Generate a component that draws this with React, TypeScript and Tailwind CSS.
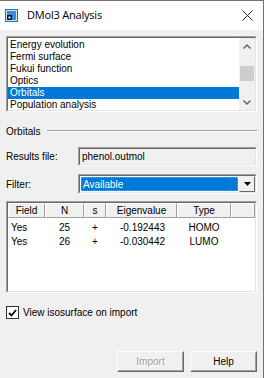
import React from 'react';

const items = [
  'Energy evolution',
  'Fermi surface',
  'Fukui function',
  'Optics',
  'Orbitals',
  'Population analysis',
];

const rows = [
  { field: 'Yes', n: '25', s: '+', e: '-0.192443', type: 'HOMO' },
  { field: 'Yes', n: '26', s: '+', e: '-0.030442', type: 'LUMO' },
];

function Sunken({ className, children }: { className?: string; children: React.ReactNode }) {
  return (
    <div className={`border border-t-[#a0a0a0] border-l-[#a0a0a0] border-r-white border-b-white ${className ?? ''}`}>
      <div className="flex h-full w-full border border-t-[#696969] border-l-[#696969] border-r-[#e3e3e3] border-b-[#e3e3e3]">
        {children}
      </div>
    </div>
  );
}

function AppIcon() {
  return (
    <svg width="13" height="13" viewBox="0 0 13 13">
      <rect x="0.5" y="0.5" width="12" height="12" fill="#cfe4f7" stroke="#1e73c8" />
      <rect x="2" y="2" width="9" height="9" fill="#3a8ad6" />
      <rect x="2" y="6" width="5" height="5" fill="#111" />
      <rect x="3.5" y="7.5" width="2" height="2" fill="#fff" />
    </svg>
  );
}

function Chevron({ up }: { up?: boolean }) {
  return (
    <svg width="8" height="5" viewBox="0 0 8 5">
      <path d={up ? 'M0.5 4.5 L4 1 L7.5 4.5' : 'M0.5 0.5 L4 4 L7.5 0.5'} fill="none" stroke="#606060" strokeWidth="1.4" />
    </svg>
  );
}

function Button({ label, disabled }: { label: string; disabled?: boolean }) {
  return (
    <div className="h-[21px] w-[67px] border border-t-white border-l-white border-r-[#696969] border-b-[#696969]">
      <div
        className={`flex h-full items-center justify-center border border-t-[#f0f0f0] border-l-[#f0f0f0] border-r-[#a0a0a0] border-b-[#a0a0a0] ${
          disabled ? 'text-[#a0a0a0] [text-shadow:1px_1px_0_#fff]' : 'text-black'
        }`}
      >
        {label}
      </div>
    </div>
  );
}

export default function App() {
  return (
    <div className="flex h-[378px] w-[264px] flex-col overflow-hidden border-t border-r border-[#707070] bg-[#f0f0f0] font-['Liberation_Sans',Arial,sans-serif] text-[10px] text-black">
      {/* title bar */}
      <div className="flex h-[29px] shrink-0 items-center bg-white pl-[5px] pr-[10px]">
        <AppIcon />
        <span className="ml-[9px] font-['Open_Sans',sans-serif] text-[11px] tracking-[-0.2px] text-black">DMol3 Analysis</span>
        <svg className="ml-auto" width="11" height="11" viewBox="0 0 11 11">
          <path d="M0.5 0.5 L10.5 10.5 M10.5 0.5 L0.5 10.5" stroke="#222" strokeWidth="1" />
        </svg>
      </div>

      <div className="flex flex-1 flex-col pl-[6px] pr-[6px] pb-[6px]">
        {/* list box */}
        <Sunken className="mt-[6px] h-[76px]">
          <div className="flex-1 overflow-hidden bg-white pt-px">
            {items.map((it) => (
              <div
                key={it}
                className={`h-[12px] pl-[2px] leading-[12px] ${it === 'Orbitals' ? 'bg-[#0078d7] text-white' : ''}`}
              >
                {it}
              </div>
            ))}
          </div>
          <div className="flex w-[16px] flex-col bg-[#f0f0f0]">
            <div className="flex h-[16px] items-center justify-center">
              <Chevron up />
            </div>
            <div className="flex-1 pt-[12px]">
              <div className="mx-px h-[15px] bg-[#cdcdcd]" />
            </div>
            <div className="flex h-[16px] items-center justify-center">
              <Chevron />
            </div>
          </div>
        </Sunken>

        {/* group header */}
        <div className="mt-[13px] flex h-[12px] items-center">
          <span>Orbitals</span>
          <div className="ml-[7px] flex-1 border-t border-b border-t-[#a0a0a0] border-b-white" />
        </div>

        {/* results file */}
        <div className="mt-[10px] flex items-center">
          <span className="w-[72px]">Results file:</span>
          <Sunken className="h-[19px] flex-1">
            <div className="flex flex-1 items-center bg-[#f0f0f0] pl-[2px]">phenol.outmol</div>
          </Sunken>
        </div>

        {/* filter */}
        <div className="mt-[8px] flex items-center">
          <span className="w-[72px]">Filter:</span>
          <Sunken className="h-[20px] flex-1">
            <div className="flex flex-1 bg-white p-px">
              <div className="flex flex-1 items-center border border-dotted border-[#e08a3a] bg-[#0078d7] pl-px text-white">
                Available
              </div>
            </div>
            <div className="flex w-[16px] items-center justify-center border border-t-[#f0f0f0] border-l-[#f0f0f0] border-r-[#696969] border-b-[#696969] bg-[#f0f0f0]">
              <svg width="7" height="4" viewBox="0 0 7 4">
                <path d="M0 0 H7 L3.5 4 Z" fill="#000" />
              </svg>
            </div>
          </Sunken>
        </div>

        {/* table */}
        <Sunken className="mt-[7px] h-[92px]">
          <div className="flex flex-1 flex-col bg-white">
            <div className="flex h-[15px] shrink-0">
              {[
                ['Field', 'w-[37px]'],
                ['N', 'w-[39px]'],
                ['s', 'w-[22px]'],
                ['Eigenvalue', 'w-[71px]'],
                ['Type', 'w-[54px]'],
                ['', 'flex-1'],
              ].map(([h, w], i) => (
                <div
                  key={i}
                  className={`${w} flex items-center justify-center border border-t-white border-l-white border-r-[#a0a0a0] border-b-[#a0a0a0] bg-[#f0f0f0]`}
                >
                  {h}
                </div>
              ))}
            </div>
            <div className="pt-[2px]">
              {rows.map((r) => (
                <div key={r.n} className="flex h-[14px] items-center">
                  <div className="w-[37px] pl-[3px]">{r.field}</div>
                  <div className="w-[39px] text-center">{r.n}</div>
                  <div className="w-[22px] text-center">{r.s}</div>
                  <div className="w-[71px] pl-[2px] text-center">{r.e}</div>
                  <div className="w-[54px] text-center">{r.type}</div>
                </div>
              ))}
            </div>
          </div>
        </Sunken>

        {/* checkbox */}
        <div className="mt-[12px] flex items-center">
          <div className="flex h-[13px] w-[13px] items-center justify-center border border-[#333] bg-white">
            <svg width="9" height="8" viewBox="0 0 9 8">
              <path d="M1 4 L3.5 6.5 L8 1" fill="none" stroke="#000" strokeWidth="1.8" />
            </svg>
          </div>
          <span className="ml-[4px]">View isosurface on import</span>
        </div>

        {/* buttons */}
        <div className="mt-auto flex justify-end gap-[6px]">
          <Button label="Import" disabled />
          <Button label="Help" />
        </div>
      </div>
    </div>
  );
}
